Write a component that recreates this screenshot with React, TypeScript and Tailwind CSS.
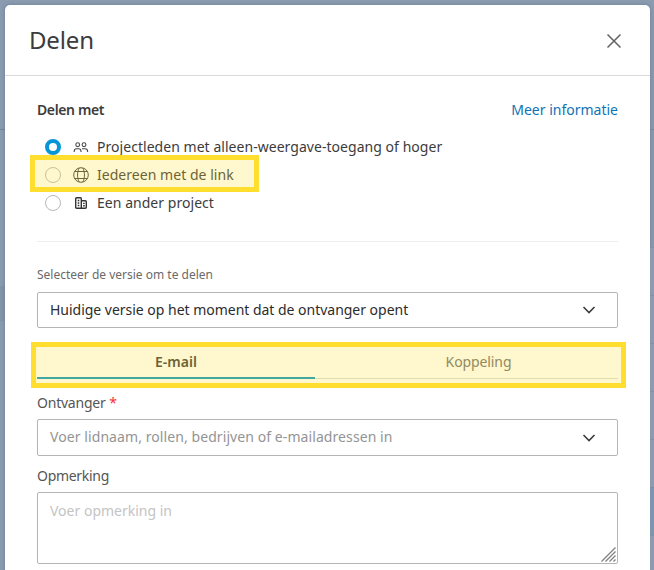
import React from "react";

function Chevron() {
  return (
    <svg width="14" height="8" viewBox="0 0 14 8" fill="none" className="shrink-0">
      <path d="M1.5 1 L7 6.5 L12.5 1" stroke="#3c3c3c" strokeWidth="1.6" />
    </svg>
  );
}

function People() {
  return (
    <svg width="16" height="16" viewBox="0 0 16 16" fill="none" stroke="#4a4a4a" strokeWidth="1.1">
      <circle cx="4.7" cy="5.7" r="1.9" />
      <circle cx="11" cy="5.7" r="1.9" />
      <path d="M1.2 13 v-.8 c0-1.5 1-2.4 2.4-2.4 h2.2 c1.3 0 2.2 .9 2.2 2.4 v.8 M9 9.8 h3 c1.6 0 2.6 .9 2.6 2.4 v.8" />
    </svg>
  );
}

function Globe() {
  return (
    <svg width="16" height="16" viewBox="0 0 16 16" fill="none" stroke="#3f3f3f" strokeWidth="1">
      <circle cx="8" cy="8" r="7.3" />
      <path d="M6.2 1 C4 5 4 11 6.2 15 M9.8 1 C12 5 12 11 9.8 15 M1.5 4.5 H14.5 M1.5 11.5 H14.5" />
    </svg>
  );
}

function Building() {
  return (
    <svg width="16" height="16" viewBox="0 0 16 16" fill="none" stroke="#333" strokeWidth="1.4">
      <path d="M2.7 12.3 V3.7 Q2.7 2.7 3.7 2.7 H7.3 Q8.3 2.7 8.3 3.7 V13.3 H3.7 Q2.7 13.3 2.7 12.3 Z M8.3 5.7 H12.3 Q13.3 5.7 13.3 6.7 V12.3 Q13.3 13.3 12.3 13.3 H8.3" />
      <path d="M4.7 5.5 h1.6 M4.7 8 h1.6 M4.7 10.5 h1.6 M10.1 8.4 h1.6 M10.1 10.7 h1.6" />
    </svg>
  );
}

function Option({ checked, icon, children }: { checked?: boolean; icon: React.ReactNode; children: React.ReactNode }) {
  return (
    <div className="flex h-7 items-center pl-2">
      <span className={checked ? "h-4 w-4 rounded-full border-4 border-[#0696d7]" : "h-4 w-4 rounded-full border border-[#b8b8b8]"} />
      <span className="ml-3 w-6">{icon}</span>
      <span className="tracking-[0.04px] whitespace-nowrap">{children}</span>
    </div>
  );
}

export default function App() {
  return (
    <div className="relative h-[570px] w-[654px] overflow-hidden bg-[#8b9cb0] pt-[5px] font-['Noto_Sans',sans-serif] text-sm text-[#3c3c3c]">
      <div className="flex">
        <div className="w-[5px] shrink-0 pt-[124px]">
          <div className="h-[157px] border-t border-[#75879c]" />
          <div className="h-[35px] bg-[#8495a8]" />
        </div>
        <main className="h-[580px] w-[645px] shrink-0 rounded-t-[5px] bg-white shadow-[0_0_4px_rgba(40,60,90,0.3)]">
          <header className="flex h-[71px] items-center justify-between border-b border-[#d9d9d9] pr-[29px] pl-6">
            <h1 className="text-2xl font-normal tracking-[-0.15px]">Delen</h1>
            <svg width="14" height="14" viewBox="0 0 14 14" stroke="#606060" strokeWidth="1.5" className="mt-0.5"><path d="M.5 .5 L13.5 13.5 M13.5 .5 L.5 13.5" /></svg>
          </header>
          <div className="px-8">
            <div className="flex h-[57px] items-center justify-between pt-2.5">
              <span className="font-semibold tracking-[-0.38px]">Delen met</span>
              <a className="text-[#0f73b4]">Meer informatie</a>
            </div>
            <div className="h-[109px] border-b border-[#eee]">
              <Option checked icon={<People />}>Projectleden met alleen-weergave-toegang of hoger</Option>
              <Option icon={<Globe />}>Iedereen met de link</Option>
              <Option icon={<Building />}>Een ander project</Option>
            </div>
            <div className="flex h-[50px] items-end pb-[9px] text-xs text-[#6a6a6a]">Selecteer de versie om te delen</div>
            <div className="flex h-9 items-center justify-between rounded-[2px] border border-[#b5b5b5] pr-[21px] pl-3">
              <span className="tracking-[-0.02px] text-[#2c2c2c]">Huidige versie op het moment dat de ontvanger opent</span>
              <Chevron />
            </div>
            <div className="mt-[14px] flex h-[37px] border-b border-[#d9d9d9] text-center leading-[40px]">
              <span className="-mb-px w-[278px] border-b-2 border-[#0696c6] font-semibold">E-mail</span>
              <span className="flex-1 pl-6 tracking-[-0.1px] text-[#707070]">Koppeling</span>
            </div>
            <div className="mt-[14px] h-[26px] text-[#555]"><span className="tracking-[-0.22px]">Ontvanger</span> <span className="text-red-500">*</span></div>
            <div className="flex h-[37px] items-center justify-between rounded-[2px] border border-[#b5b5b5] pr-[21px] pl-3 text-[#949494]">
              <span className="pb-0.5 tracking-[0.08px]">Voer lidnaam, rollen, bedrijven of e-mailadressen in</span>
              <Chevron />
            </div>
            <div className="mt-2.5 h-[26px] tracking-[-0.3px] text-[#555]">Opmerking</div>
            <div className="flex h-[72px] items-end justify-between rounded-[2px] border border-[#b5b5b5] pr-px pb-px pl-3 text-[#c4c4c4]">
              <span className="self-start pt-2">Voer opmerking in</span>
              <svg width="15" height="15" viewBox="0 0 15 15" stroke="#808080" strokeWidth="1.3">
                <path d="M.5 14.5 L14.5 .5 M4.5 14.5 L14.5 4.5 M8.5 14.5 L14.5 8.5 M12.5 14.5 L14.5 12.5" />
              </svg>
            </div>
          </div>
        </main>
        <div className="w-1 pt-[124px]">
          <div className="h-[118px] border-t border-[#75879c]" />
          <div className="h-12 border-t border-[#8091a8] bg-[#8c9bb3]" />
          <div className="h-12 border-t border-[#8091a8] bg-[#8c9bb3]" />
          <div className="h-12 border-t border-[#8091a8] bg-[#8c9bb3]" />
          <div className="h-12 border-t border-[#8091a8] bg-[#8c9bb3]" />
          <div className="h-12 border-t border-[#8091a8] bg-[#8c9bb3]" />
          <div className="h-12 border-t border-[#7890a5] bg-[#7b96ad]" />
          <div className="h-12 border-t border-[#8091a8] bg-[#8c9bb3]" />
        </div>
      </div>
      <div className="absolute top-[155px] left-[30px] h-[37px] w-[229px] border-5 border-[#ffde30] bg-[#ffde30]/24 bg-clip-padding" />
      <div className="absolute top-[342px] left-[31px] h-[46px] w-[595px] border-5 border-[#ffde30] bg-[#ffde30]/24 bg-clip-padding" />
    </div>
  );
}
